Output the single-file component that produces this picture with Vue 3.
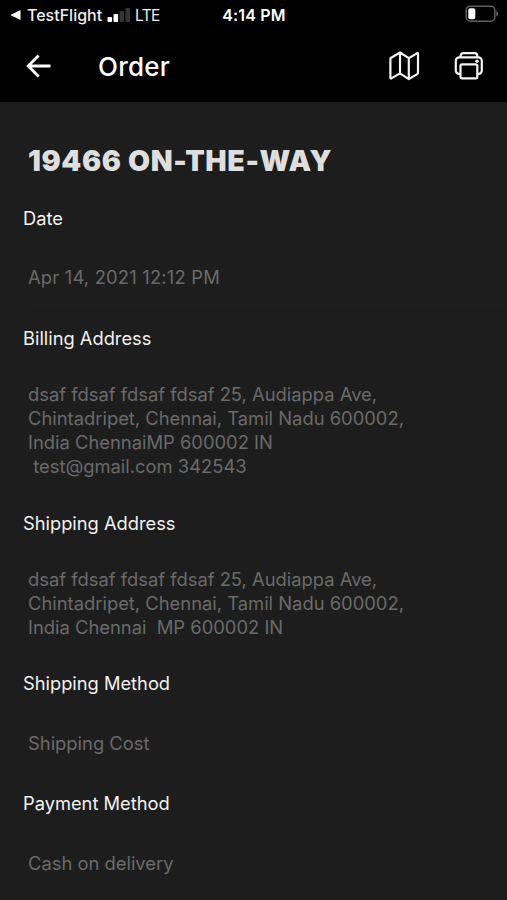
<script setup>
const sections = [
  { title: 'Date', numeric: true, lines: ['Apr 14, 2021 12:12 PM'] },
  {
    title: 'Billing Address',
    lines: [
      'dsaf fdsaf fdsaf fdsaf 25, Audiappa Ave,',
      'Chintadripet, Chennai, Tamil Nadu 600002,',
      'India ChennaiMP 600002 IN',
      ' test@gmail.com 342543',
    ],
  },
  {
    title: 'Shipping Address',
    lines: [
      'dsaf fdsaf fdsaf fdsaf 25, Audiappa Ave,',
      'Chintadripet, Chennai, Tamil Nadu 600002,',
      'India Chennai  MP 600002 IN',
    ],
  },
  { title: 'Shipping Method', lines: ['Shipping Cost'] },
  { title: 'Payment Method', lines: ['Cash on delivery'] },
]
</script>

<template>
  <div class="screen">
    <div class="status">
      <div class="left">
        <svg class="back-app" width="11" height="12" viewBox="0 0 11 12"><path d="M0.3 6 10.5 1v10z" fill="#fff" /></svg>
        <span class="app-name">TestFlight</span>
        <svg class="signal" width="24" height="14" viewBox="0 0 24 14">
          <rect x="0.5" y="9" width="4.6" height="5" rx="1" fill="#fff" />
          <rect x="6.5" y="6" width="4.6" height="8" rx="1" fill="#fff" />
          <rect x="12.5" y="3" width="4.6" height="11" rx="1" fill="#353535" />
          <rect x="18.5" y="0" width="4.6" height="14" rx="1" fill="#353535" />
        </svg>
        <span class="carrier">LTE</span>
      </div>
      <span class="time">4:14 PM</span>
      <svg class="battery" width="34" height="18" viewBox="0 0 34 18">
        <rect x="1.2" y="1.2" width="28.6" height="15" rx="4" fill="none" stroke="#606060" stroke-width="1.5" />
        <path d="M31.2 6v5.6q2-.8 2-2.8t-2-2.8z" fill="#606060" />
        <rect x="3.3" y="3.2" width="7" height="11" rx="1.8" fill="#fff" />
      </svg>
    </div>
    <header class="bar">
      <svg class="arrow" width="26" height="24" viewBox="0 0 26 24" fill="none" stroke="#fff" stroke-width="2.8">
        <path d="M24.5 12H2.2M12.6 1.6 2.2 12 12.6 22.4" />
      </svg>
      <h1 class="title">Order</h1>
      <svg class="map" width="32" height="32" viewBox="0 0 32 32" fill="none" stroke="#f4f4f4" stroke-width="2.2" stroke-linejoin="round" stroke-linecap="round">
        <path d="M2.4 8.2 12 2.5 20.8 8.2 29.2 3.1Q30 2.8 30 3.8V22.6Q30 23.6 29.2 24.1L20.8 29.1 12 23.4 3.3 28.4Q2.4 28.8 2.4 27.8ZM12 2.5V23.4M20.8 8.2V29.1" />
      </svg>
      <svg class="printer" width="30" height="30" viewBox="0 0 30 30" fill="none" stroke="#f4f4f4" stroke-width="2.2" stroke-linejoin="round">
        <path d="M6.5 22.8H5A3.2 3.2 0 0 1 1.8 19.6V9.8A3.5 3.5 0 0 1 5.3 6.3H24.3A3.5 3.5 0 0 1 27.8 9.8V19.6A3.2 3.2 0 0 1 24.6 22.8H23.4" />
        <rect x="6.5" y="13.3" width="16.8" height="14.1" rx="1.6" />
        <path d="M6.5 6.3V4.9A2.7 2.7 0 0 1 9.2 2.2H20.6A2.7 2.7 0 0 1 23.3 4.9V6.3" />
        <circle cx="23" cy="10.2" r="1.7" fill="#f4f4f4" stroke="none" />
      </svg>
    </header>
    <main class="content">
      <h2 class="heading">19466 ON-THE-WAY</h2>
      <section v-for="section in sections" :key="section.title">
        <h3 class="label">{{ section.title }}</h3>
        <div class="row" :class="{ numeric: section.numeric }">
          <div v-for="(line, i) in section.lines" :key="i" class="line">{{ line }}</div>
        </div>
      </section>
    </main>
  </div>
</template>

<style>
body {
  margin: 0;
  background: #1c1c1c;
}
</style>

<style scoped>
.screen {
  box-sizing: border-box;
  width: 507px;
  height: 900px;
  overflow: hidden;
  background: #1d1d1d;
  color: #fff;
  font-family: Inter, "Liberation Sans", sans-serif;
}
.status {
  display: grid;
  grid-template-columns: 1fr auto 1fr;
  align-items: center;
  height: 30px;
  padding: 0 8px 0 10px;
  background: #000;
}
.left {
  display: flex;
  align-items: center;
}
.app-name {
  margin-left: 6px;
  width: 74px;
  font-size: 16px;
  font-weight: 500;
  color: #eee;
}
.signal {
  margin-left: 6px;
}
.carrier {
  margin-left: 4px;
  font-size: 15.5px;
  letter-spacing: -0.6px;
  color: #eee;
}
.time {
  margin-right: 1px;
  font-size: 16px;
  font-weight: 600;
  letter-spacing: 0.2px;
}
.battery {
  justify-self: end;
  margin-top: -2px;
}
.bar {
  display: flex;
  align-items: center;
  box-sizing: border-box;
  height: 72px;
  padding: 0 23px 0 26px;
  background: #000;
}
.title {
  flex: 1;
  margin: 2px 0 0 46px;
  font-size: 26px;
  font-weight: 500;
  line-height: 32px;
  letter-spacing: 0.2px;
}
.map {
  margin-top: -1px;
}
.printer {
  margin: -1px 0 0 34px;
}
.content {
  padding-top: 39px;
}
.heading {
  margin: 0 0 4.6px 28px;
  font-size: 28.5px;
  font-weight: 900;
  line-height: 40px;
  letter-spacing: 0.62px;
  color: #dedede;
}
.label {
  margin: 0 0 0 23px;
  font-size: 18.3px;
  font-weight: 400;
  line-height: 64px;
  color: #f2f2f2;
}
.row {
  display: flex;
  flex-direction: column;
  justify-content: center;
  box-sizing: border-box;
  min-height: 56px;
  margin-left: 28px;
  padding: 12px 0 11.2px;
  border-bottom: 1px solid #202020;
}
.line {
  white-space: pre;
  font-size: 18.4px;
  line-height: 24.2px;
  letter-spacing: -0.01px;
  color: #6a6a6a;
}
.numeric .line {
  letter-spacing: 0.18px;
}
</style>
